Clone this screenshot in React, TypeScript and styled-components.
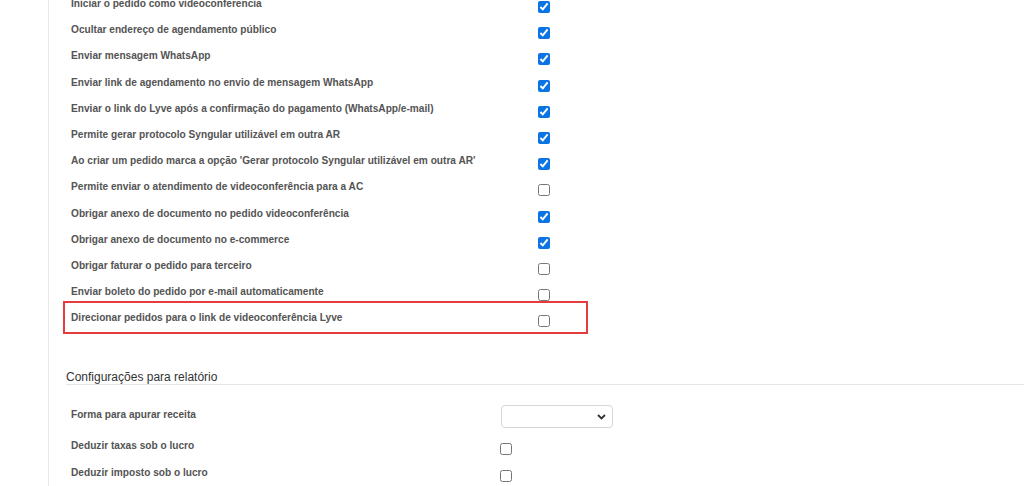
import React from "react";
import styled, { createGlobalStyle } from "styled-components";

const GlobalStyle = createGlobalStyle`
  html, body {
    margin: 0;
    padding: 0;
    background: #ffffff;
    overflow: hidden;
  }
  body {
    font-family: "Liberation Sans", Arial, sans-serif;
  }
`;

const Page = styled.div`
  width: 1024px;
  height: 486px;
  padding-left: 48px;
  box-sizing: border-box;
  overflow: hidden;
`;

const Panel = styled.div`
  border-left: 1px solid #e8e8e8;
  min-height: 486px;
  padding-left: 17px;
  box-sizing: border-box;
`;

const OptionList = styled.div`
  margin-top: -6px;
  padding-left: 5px;
`;

const Row = styled.div<{ $labelWidth: number; $highlight?: boolean }>`
  position: relative;
  display: grid;
  grid-template-columns: ${(p) => p.$labelWidth}px auto;
  align-items: start;
  height: 26.2px;

  ${(p) =>
    p.$highlight &&
    `
    &::after {
      content: "";
      position: absolute;
      left: -8px;
      top: -7.4px;
      width: 525px;
      height: 33px;
      border: 2px solid #e63b3d;
      box-sizing: border-box;
      pointer-events: none;
    }
  `}
`;

const Label = styled.label<{ $offset?: number }>`
  font-size: 10.15px;
  font-weight: 700;
  line-height: 16px;
  color: #545454;
  margin-top: ${(p) => p.$offset ?? 2}px;
  white-space: nowrap;
`;

const Check = styled.input.attrs({ type: "checkbox", readOnly: true })`
  width: 12px;
  height: 12px;
  margin: 7px 0 0 0;
  accent-color: #0b74e5;
`;

const SectionTitle = styled.div`
  margin-top: 35.4px;
  font-size: 12px;
  line-height: 14px;
  color: #333333;
  border-bottom: 1px solid #e5e5e5;
`;

const ReportList = styled.div`
  margin-top: 16px;
  padding-left: 5px;
`;

const SelectRow = styled.div`
  display: grid;
  grid-template-columns: 430px auto;
  align-items: start;
  height: 35.5px;
`;

const SelectWrap = styled.div`
  position: relative;
  width: 112px;
  height: 23px;
  margin-top: 4px;
`;

const Select = styled.select`
  appearance: none;
  -webkit-appearance: none;
  width: 112px;
  height: 23px;
  border: 1px solid #d6d6d6;
  border-radius: 4px;
  background: #ffffff;
  box-sizing: border-box;
  font-family: "Liberation Sans", Arial, sans-serif;
  font-size: 11px;
  padding: 0 20px 0 6px;
  color: #333;
`;

const Chevron = styled.svg`
  position: absolute;
  right: 7px;
  top: 9px;
  pointer-events: none;
`;

const options: { label: string; checked: boolean }[] = [
  { label: "Iniciar o pedido como videoconferencia", checked: true },
  { label: "Ocultar endereço de agendamento público", checked: true },
  { label: "Enviar mensagem WhatsApp", checked: true },
  { label: "Enviar link de agendamento no envio de mensagem WhatsApp", checked: true },
  { label: "Enviar o link do Lyve após a confirmação do pagamento (WhatsApp/e-mail)", checked: true },
  { label: "Permite gerar protocolo Syngular utilizável em outra AR", checked: true },
  { label: "Ao criar um pedido marca a opção 'Gerar protocolo Syngular utilizável em outra AR'", checked: true },
  { label: "Permite enviar o atendimento de videoconferência para a AC", checked: false },
  { label: "Obrigar anexo de documento no pedido videoconferência", checked: true },
  { label: "Obrigar anexo de documento no e-commerce", checked: true },
  { label: "Obrigar faturar o pedido para terceiro", checked: false },
  { label: "Enviar boleto do pedido por e-mail automaticamente", checked: false },
  { label: "Direcionar pedidos para o link de videoconferência Lyve", checked: false },
];

export default function App() {
  return (
    <>
      <GlobalStyle />
      <Page>
        <Panel>
          <OptionList>
            {options.map((o, i) => (
              <Row key={i} $labelWidth={467} $highlight={i === options.length - 1}>
                <Label>{o.label}</Label>
                <Check defaultChecked={o.checked} />
              </Row>
            ))}
          </OptionList>

          <SectionTitle>Configurações para relatório</SectionTitle>

          <ReportList>
            <SelectRow>
              <Label $offset={6.5}>Forma para apurar receita</Label>
              <SelectWrap>
                <Select defaultValue="">
                  <option value=""></option>
                </Select>
                <Chevron width="9" height="6" viewBox="0 0 9 6">
                  <path d="M1 1 L4.5 4.5 L8 1" fill="none" stroke="#333" strokeWidth="1.8" />
                </Chevron>
              </SelectWrap>
            </SelectRow>
            <Row $labelWidth={429}>
              <Label $offset={2}>Deduzir taxas sob o lucro</Label>
              <Check defaultChecked={false} />
            </Row>
            <Row $labelWidth={429}>
              <Label $offset={2}>Deduzir imposto sob o lucro</Label>
              <Check defaultChecked={false} />
            </Row>
          </ReportList>
        </Panel>
      </Page>
    </>
  );
}
